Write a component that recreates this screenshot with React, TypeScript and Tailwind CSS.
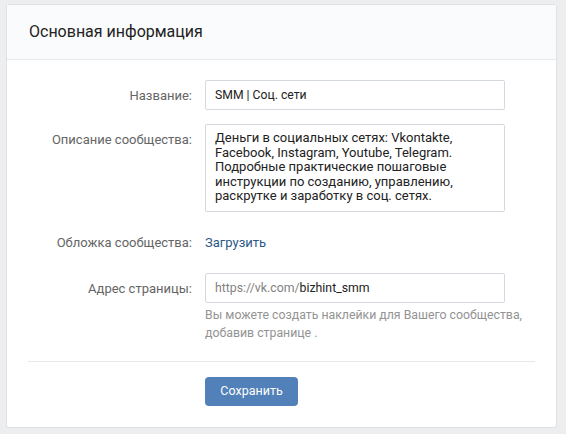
import React from 'react';

const font = { fontFamily: 'Roboto, "Open Sans", sans-serif' };

const Row = ({ label, children, className = '' }: { label: string; children: React.ReactNode; className?: string }) => (
  <div className={`flex items-start ${className}`}>
    <div className="w-[185px] shrink-0 pt-[7px] text-right text-[13px] leading-[17px] text-[#656565]">{label}</div>
    <div className="ml-[13px] w-[300px]">{children}</div>
  </div>
);

const App = () => {
  return (
    <div className="min-h-[434px] w-[566px] bg-[#edeef0] pt-[5px] pl-[7px]" style={font}>
      <div className="w-[549px] h-[422px] rounded-[2px] bg-white shadow-[0_0_0_1px_#dfe1e5]">
        <div className="flex h-[55px] items-center border-b border-[#e7e8ec] bg-[#fafbfc] pl-[22px] text-[16px] text-[#222]">
          Основная информация
        </div>
        <div className="pt-[20px]">
          <Row label="Название:">
            <div className="h-[30px] rounded-[2px] border border-[#d3d9de] px-[9px] text-[12.2px] leading-[28px] text-[#222]">
              SMM | Соц. сети
            </div>
          </Row>
          <Row label="Описание сообщества:" className="mt-[14px]">
            <div className="h-[88px] rounded-[2px] border border-[#d3d9de] px-[9px] pt-[6px] text-[13px] leading-[14.6px] text-[#222]">
              Деньги в социальных сетях: Vkontakte,
              <br />
              Facebook, Instagram, Youtube, Telegram.
              <br />
              Подробные практические пошаговые
              <br />
              инструкции по созданию, управлению,
              <br />
              раскрутке и заработку в соц. сетях.
            </div>
          </Row>
          <div className="mt-[22px] flex items-center">
            <div className="w-[185px] shrink-0 text-right text-[13px] leading-[17px] text-[#656565]">Обложка сообщества:</div>
            <div className="ml-[13px] text-[13px] leading-[17px] text-[#2a5885]">Загрузить</div>
          </div>
          <Row label="Адрес страницы:" className="mt-[22px]">
            <div className="h-[30px] rounded-[2px] border border-[#d3d9de] px-[9px] text-[12.3px] leading-[28px] text-[#222]">
              <span className="text-[#828282]">https://vk.com/</span>bizhint_smm
            </div>
            <div className="mt-[3px] w-[340px] text-[12.3px] leading-[18px] text-[#939393]">
              Вы можете создать наклейки для Вашего сообщества,
              <br />
              добавив странице .
            </div>
          </Row>
          <div className="mx-[21px] mt-[19px] border-t border-[#e7e8ec]" />
          <div className="mt-[15px] pl-[198px]">
            <button className="h-[29px] w-[93px] rounded-[4px] bg-[#5181b8] text-[12.5px] text-white">Сохранить</button>
          </div>
        </div>
      </div>
    </div>
  );
};

export default App;
